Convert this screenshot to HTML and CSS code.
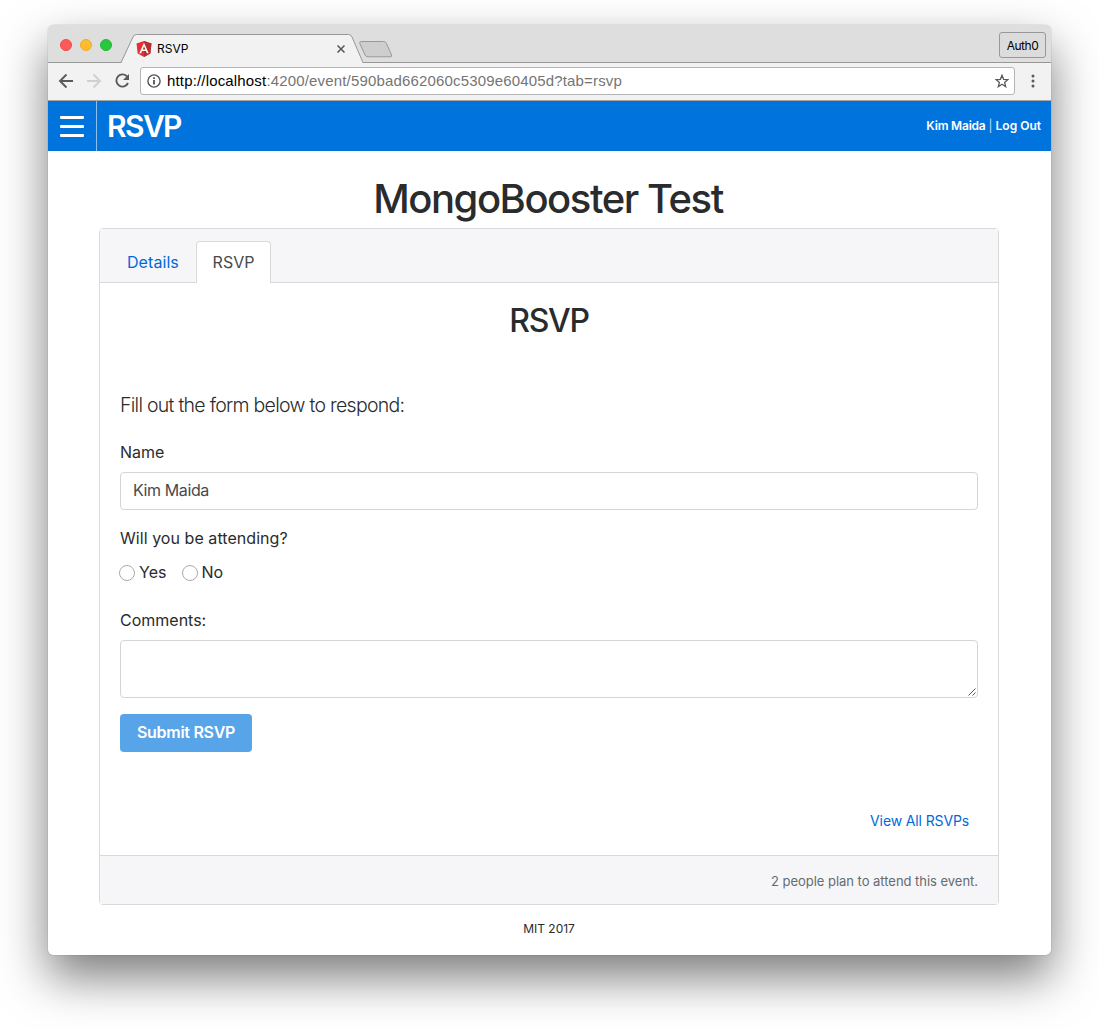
FILE: index.html
```html
<!DOCTYPE html>
<html lang="en">
<head>
<meta charset="utf-8">
<title>RSVP</title>
<link rel="stylesheet" href="styles.css">
</head>
<body>
<div class="window">
  <div class="tabstrip">
    <div class="lights"><i class="light red"></i><i class="light yellow"></i><i class="light green"></i></div>
    <div class="browser-tab">
      <svg class="tab-shape" width="246" height="30" viewBox="0 0 246 30"><path d="M-1 29.500H0L12 3Q13 .5 15.500 .5H227.500Q230 .5 231 3L242 29.500H246V30H0Z" fill="#f2f2f2"/><path d="M-1 28.500H0L12 3Q13 .5 15.500 .5H227.500Q230 .5 231 3L242 28.500H246" fill="none" stroke="#979797"/></svg>
      <svg class="favicon" width="16" height="16" viewBox="0 0 16 16"><path d="M8 0 15.500 2.600 14.300 12.400 8 16 1.700 12.400 .5 2.600Z" fill="#e23237"/><path d="M8 0 15.500 2.600 14.300 12.400 8 16Z" fill="#b52e31"/><path d="M8 1.800 3.300 12.300H5.100L6 10H10L10.900 12.300H12.700ZM8 5.300 9.400 8.600H6.600Z" fill="#fff" fill-rule="evenodd"/></svg>
      <span class="tab-title">RSVP</span>
      <svg class="tab-close" width="8" height="8" viewBox="0 0 8 8"><path d="M.5 .5 7.500 7.500M7.500 .5 .5 7.500" stroke="#555" stroke-width="1.500"/></svg>
    </div>
    <svg class="new-tab" width="34" height="17" viewBox="0 0 34 17"><path d="M3 .5H24.500Q26.500 .5 27.500 2.500L32.500 14Q33.200 15.800 31 15.800H9Q7 15.800 6 14L.8 2.500Q0 .5 3 .5Z" fill="#cecece" stroke="#999"/></svg>
    <span class="profile">Auth0</span>
  </div>
  <div class="toolbar">
    <svg class="nav-icons" width="92" height="20" viewBox="0 0 92 20" fill="none" stroke-width="1.900"><path d="M25 10H12.500M18.500 3.500 12 10 18.500 16.500" stroke="#5a5a5a"/><path d="M39 10H51.500M45.500 3.500 52 10 45.500 16.500" stroke="#d0d0d0"/><path d="M79.300 5.800A6.100 6.100 0 1 0 80 12" stroke="#5a5a5a"/><path d="M81 3V9H75Z" fill="#5a5a5a"/></svg>
    <div class="address">
      <svg class="info" width="14" height="14" viewBox="0 0 14 14"><circle cx="7" cy="7" r="6.100" fill="none" stroke="#555" stroke-width="1.400"/><path d="M7 6V10.500M7 3.300V4.900" stroke="#555" stroke-width="1.800"/></svg>
      <span class="url"><b>http://localhost</b>:4200/event/590bad662060c5309e60405d?tab=rsvp</span>
      <svg class="star" width="14" height="14" viewBox="0 0 14 14"><path d="M7 1.300 8.600 5.300 13 5.600 9.600 8.400 10.700 12.700 7 10.300 3.300 12.700 4.400 8.400 1 5.600 5.400 5.300Z" fill="none" stroke="#5a5a5a" stroke-width="1.300"/></svg>
    </div>
    <svg class="menu-dots" width="4" height="14" viewBox="0 0 4 14" fill="#5a5a5a"><circle cx="2" cy="2" r="1.500"/><circle cx="2" cy="7" r="1.500"/><circle cx="2" cy="12" r="1.500"/></svg>
  </div>
  <header class="site-header">
    <button class="hamburger" aria-label="Menu"><i></i><i></i><i></i></button>
    <span class="brand">RSVP</span>
    <span class="account"><b class="user">Kim Maida</b><span class="divider">|</span><b>Log Out</b></span>
  </header>
  <main class="page">
    <h1>MongoBooster Test</h1>
    <section class="card">
      <nav class="card-tabs"><a>Details</a><span class="active">RSVP</span></nav>
      <div class="card-body">
        <h2>RSVP</h2>
        <p class="lead">Fill out the form below to respond:</p>
        <label class="name-label">Name</label>
        <div class="input">Kim Maida</div>
        <label class="attend-label">Will you be attending?</label>
        <div class="radios"><i class="radio"></i><span>Yes</span><i class="radio second"></i><span>No</span></div>
        <label class="comments-label">Comments:</label>
        <div class="textarea"><svg width="8" height="8" viewBox="0 0 8 8"><path d="M.5 7.500 7.500 .5M4.500 7.500 7.500 4.500" stroke="#555" fill="none"/></svg></div>
        <button class="submit">Submit RSVP</button>
        <div class="view-all"><a>View All RSVPs</a></div>
      </div>
      <div class="card-footer">2 people plan to attend this event.</div>
    </section>
    <footer class="copyright">MIT 2017</footer>
  </main>
</div>
</body>
</html>
```
FILE: styles.css
```css
* { box-sizing: border-box; }
body {
  margin: 0;
  height: 1029px;
  padding: 25px 48px 0;
  overflow: hidden;
  background: #fff;
  color: #292b2c;
  font: 16px/24px Inter, sans-serif;
}
svg { display: block; flex: none; }
h1, h2, p { margin: 0; }
.window {
  width: 1003px;
  height: 930px;
  border-radius: 6px 6px 5px 5px;
  background: #fff;
  box-shadow: 0 0 1px rgba(0, 0, 0, .5), 0 22px 48px rgba(0, 0, 0, .52);
}
.tabstrip {
  display: flex;
  height: 38px;
  border-bottom: 1px solid #979797;
  border-radius: 6px 6px 0 0;
  background: #dedede;
}
.lights { display: flex; gap: 8px; width: 73px; padding: 14px 0 0 12px; }
.light { width: 12px; height: 12px; border-radius: 50%; border: 1px solid #f04b47; background: #fc5b57; }
.yellow { background: #fdbc30; border-color: #eead27; }
.green { background: #27c840; border-color: #1fb934; }
.browser-tab {
  position: relative;
  display: flex;
  align-items: center;
  width: 243px;
  height: 30px;
  margin-top: 9px;
  padding: 0 19px 0 15px;
}
.tab-shape { position: absolute; left: 0; top: 0; overflow: visible; }
.favicon, .tab-title, .tab-close { position: relative; }
.tab-title { margin: 0 auto 0 5px; color: #000; font: 12px/16px Inter, sans-serif; }
.new-tab { margin: 16px auto 0 -5px; }
.profile {
  width: 47px;
  height: 26px;
  margin: 7px 5px 0 0;
  border: 1px solid #989898;
  border-radius: 3px;
  background: #dcdcdc;
  color: #000;
  font-size: 12px;
  letter-spacing: -.45px;
  line-height: 25px;
  text-align: center;
}
.toolbar {
  display: flex;
  align-items: center;
  height: 38px;
  padding-bottom: 2px;
  border-bottom: 1px solid #a5a5a5;
  background: #f2f2f2;
}
.address {
  display: flex;
  align-items: center;
  width: 875px;
  height: 28px;
  padding: 0 5px 0 6px;
  border: 1px solid #b5b5b5;
  border-radius: 3px;
  background: #fff;
}
.url {
  margin: 0 auto 0 6px;
  color: #757575;
  font: 15px/24px "Liberation Sans", sans-serif;
  letter-spacing: .165px;
}
.url b { color: #000; font-weight: 400; }
.menu-dots { margin-left: 16px; }
.site-header { display: flex; height: 50px; background: #0073dd; color: #fff; }
.hamburger {
  display: flex;
  flex-direction: column;
  gap: 6px;
  width: 49px;
  padding: 15px 12px 0;
  border: 0;
  border-right: 1px solid #8cc0ee;
  background: none;
}
.hamburger i { width: 24px; height: 3px; border-radius: 1px; background: #fff; }
.brand {
  margin: 0 auto 0 10px;
  font-size: 30px;
  font-weight: 600;
  letter-spacing: -1.6px;
  line-height: 50px;
}
.account { padding-right: 10px; font-size: 12px; line-height: 50px; }
.account b { font-weight: 600; }
.account .user { letter-spacing: -.2px; }
.divider { margin: 0 3px; opacity: .75; }
.page { display: flex; flex-direction: column; padding: 26px 52px 0 51px; }
h1 {
  height: 51px;
  padding-right: 2px;
  font-size: 40px;
  font-weight: 500;
  letter-spacing: -1.45px;
  line-height: 44px;
  text-align: center;
}
.card { border: 1px solid #d9d9da; border-radius: 4px; }
.card-tabs {
  display: flex;
  height: 54px;
  padding: 12px 0 0 20px;
  border-bottom: 1px solid #d9d9da;
  background: #f6f6f9;
}
.card-tabs a { width: 76px; padding-left: 7px; color: #0069d9; letter-spacing: .07px; line-height: 42px; }
.card-tabs .active {
  width: 75px;
  height: 42px;
  border: 1px solid #d9d9da;
  border-bottom: 0;
  border-radius: 4px 4px 0 0;
  background: #fff;
  color: #464a4c;
  line-height: 41px;
  text-align: center;
}
.card-body { height: 572px; padding: 20px; }
h2 {
  font-size: 32px;
  font-weight: 500;
  letter-spacing: -1.3px;
  line-height: 36px;
  text-align: center;
}
.lead {
  margin-top: 51px;
  font-size: 19.5px;
  font-weight: 300;
  letter-spacing: -.72px;
  line-height: 30px;
}
label { display: block; }
.name-label { margin-top: 20px; letter-spacing: -.05px; }
.input {
  height: 38px;
  margin-top: 8px;
  padding-left: 12px;
  border: 1px solid #d5d5d6;
  border-radius: 4px;
  color: #464a4c;
  letter-spacing: -.4px;
  line-height: 35px;
}
.attend-label { margin-top: 16px; letter-spacing: .05px; }
.radios { display: flex; align-items: center; height: 24px; margin-top: 10px; }
.radio { width: 16px; height: 16px; margin: 1px 4px 0 -1px; border: 1px solid #aaa; border-radius: 50%; }
.second { margin-left: 15.600px; margin-right: 3.500px; }
.comments-label { margin-top: 24px; }
.textarea {
  display: flex;
  align-items: flex-end;
  justify-content: flex-end;
  height: 58px;
  margin-top: 8px;
  padding: 1px;
  border: 1px solid #d5d5d6;
  border-radius: 4px;
}
.submit {
  display: block;
  width: 132px;
  height: 38px;
  margin-top: 16px;
  padding: 0 0 2px;
  border: 0;
  border-radius: 4px;
  background: #57a4e8;
  color: #fff;
  font: 600 16px/36px Inter, sans-serif;
  letter-spacing: -.28px;
}
.view-all {
  margin-top: 57px;
  padding-right: 9px;
  color: #0069d9;
  font-size: 14px;
  letter-spacing: -.13px;
  text-align: right;
}
.card-footer {
  height: 49px;
  padding-right: 20px;
  border-top: 1px solid #d9d9da;
  background: #f6f6f9;
  color: #636c72;
  font-size: 13px;
  letter-spacing: -.03px;
  line-height: 50px;
  text-align: right;
}
.copyright { font-size: 12px; line-height: 48px; text-align: center; }
```
